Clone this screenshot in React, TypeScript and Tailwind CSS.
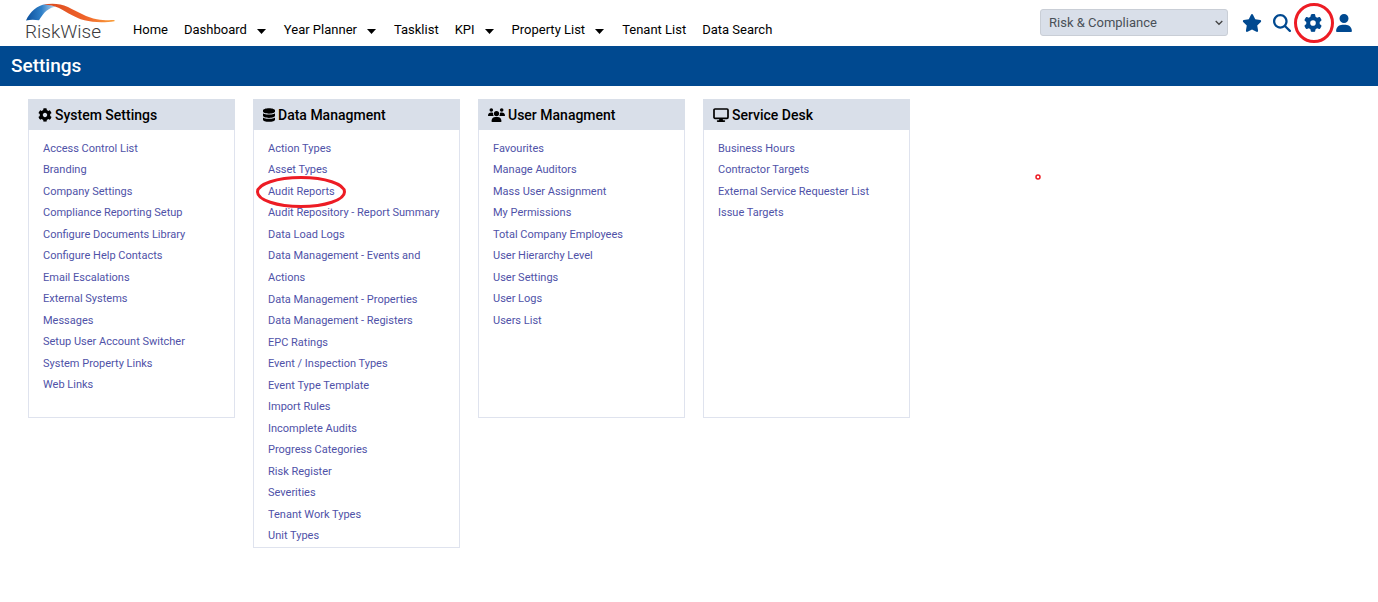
import { ReactNode } from "react";
import {
  FaDatabase,
  FaGear,
  FaMagnifyingGlass,
  FaStar,
  FaUser,
} from "react-icons/fa6";
import { FaCog } from "react-icons/fa";

type Card = { title: string; icon: ReactNode; links: string[] };

const NAV = [
  { label: "Home" },
  { label: "Dashboard", menu: true },
  { label: "Year Planner", menu: true },
  { label: "Tasklist" },
  { label: "KPI", menu: true },
  { label: "Property List", menu: true },
  { label: "Tenant List" },
  { label: "Data Search" },
];

function PeopleIcon() {
  return (
    <svg width="17" height="14" viewBox="0 0 17 14" fill="currentColor" aria-hidden="true">
      <circle cx="3.3" cy="2" r="1.8" />
      <circle cx="13.7" cy="2" r="1.8" />
      <circle cx="8.5" cy="5.6" r="2.6" />
      <path d="M0 7.8C0 5.8 1.4 4.6 3.2 4.6c.8 0 1.4.1 1.9.5-.2 1.2 0 2.1.6 3H.4Q0 8.1 0 7.8Z" />
      <path d="M17 7.8c0-2-1.4-3.2-3.2-3.2-.8 0-1.4.1-1.9.5.2 1.2 0 2.1-.6 3h5.300q.4 0 .4-.3Z" />
      <path d="M3.500 13.200c0-2.600 1.700-4.200 3.900-4.200h2.200c2.200 0 3.900 1.600 3.900 4.200 0 .5-.3.800-.8.800H4.300c-.5 0-.8-.3-.8-.8Z" />
    </svg>
  );
}

function ScreenIcon() {
  return (
    <svg width="16" height="14" viewBox="0 0 16 14" aria-hidden="true">
      <rect x="1" y="1" width="14" height="9.300" rx="1" fill="none" stroke="currentColor" strokeWidth="1.700" />
      <path d="M6.500 10h3l.5 2.300h1.500q.7 0 .7.800t-.7.800h-7q-.7 0-.7-.8t.7-.8H6Z" fill="currentColor" />
    </svg>
  );
}

const CARDS: Card[] = [
  {
    title: "System Settings",
    icon: <FaCog size={14} />,
    links: [
      "Access Control List",
      "Branding",
      "Company Settings",
      "Compliance Reporting Setup",
      "Configure Documents Library",
      "Configure Help Contacts",
      "Email Escalations",
      "External Systems",
      "Messages",
      "Setup User Account Switcher",
      "System Property Links",
      "Web Links",
    ],
  },
  {
    title: "Data Managment",
    icon: <FaDatabase className="h-[14px] w-3" />,
    links: [
      "Action Types",
      "Asset Types",
      "Audit Reports",
      "Audit Repository - Report Summary",
      "Data Load Logs",
      "Data Management - Events and Actions",
      "Data Management - Properties",
      "Data Management - Registers",
      "EPC Ratings",
      "Event / Inspection Types",
      "Event Type Template",
      "Import Rules",
      "Incomplete Audits",
      "Progress Categories",
      "Risk Register",
      "Severities",
      "Tenant Work Types",
      "Unit Types",
    ],
  },
  {
    title: "User Managment",
    icon: <PeopleIcon />,
    links: [
      "Favourites",
      "Manage Auditors",
      "Mass User Assignment",
      "My Permissions",
      "Total Company Employees",
      "User Hierarchy Level",
      "User Settings",
      "User Logs",
      "Users List",
    ],
  },
  {
    title: "Service Desk",
    icon: <ScreenIcon />,
    links: [
      "Business Hours",
      "Contractor Targets",
      "External Service Requester List",
      "Issue Targets",
    ],
  },
];

function Logo() {
  return (
    <svg width="92" height="46" viewBox="0 0 92 46" role="img" aria-label="RiskWise">
      <defs>
        <linearGradient id="blue" x1="0" x2="1">
          <stop offset="0" stopColor="#0b4f9c" />
          <stop offset="0.5" stopColor="#2f80c8" />
          <stop offset="1" stopColor="#cfe3f4" />
        </linearGradient>
        <linearGradient id="orange" x1="0" x2="1">
          <stop offset="0" stopColor="#d9481f" />
          <stop offset="0.6" stopColor="#f0642a" />
          <stop offset="1" stopColor="#f9a03c" />
        </linearGradient>
      </defs>
      <path d="M1 20.500C5 12 12 5 21 4.300L32 6.500C24 7 18 13 14 20.300Q7 19 1 20.500Z" fill="url(#blue)" />
      <path d="M18 4.700C27 3 35 3.500 43 7c10 5 19 10.500 29 12.200 6 1 11 1.100 17.500.8v1.200c-9 1.500-21 1.500-30-.9C49 17.500 43 12.500 34 8 28 5 23 4.500 18 4.700Z" fill="url(#orange)" />
      <text x="0" y="38" fontSize="19" fontWeight="300" fill="#3c3c3e" fontFamily="Roboto, sans-serif">
        RiskWise
      </text>
    </svg>
  );
}

function Header() {
  return (
    <header className="flex h-[46px] items-start pr-[25px] pl-[25px]">
      <a href="#home" className="shrink-0">
        <Logo />
      </a>
      <nav className="ml-4 flex gap-4 pt-5 text-[13px] leading-5 text-black">
        {NAV.map((item) =>
          item.menu ? (
            <button key={item.label} type="button" className="flex items-center gap-[10px] pr-[2px] whitespace-nowrap">
              {item.label}
              <svg width="9" height="5" viewBox="0 0 9 5" className="mt-[2px]" aria-hidden="true">
                <path d="M0 0h9L4.500 5Z" />
              </svg>
            </button>
          ) : (
            <a key={item.label} href="#nav" className="whitespace-nowrap">
              {item.label}
            </a>
          ),
        )}
      </nav>
      <div className="ml-auto flex items-center pt-[9px] text-[#004990]">
        <div className="grid items-center">
          <select
            aria-label="Module"
            className="col-start-1 row-start-1 h-[27px] w-[188px] appearance-none rounded-[3px] border border-[#c9ced6] bg-[#d9dfe9] px-2 text-[13px] text-[#495057]"
          >
            <option>Risk &amp; Compliance</option>
          </select>
          <svg width="8" height="6" viewBox="0 0 8 6" className="pointer-events-none col-start-1 row-start-1 mr-[5px] justify-self-end" aria-hidden="true">
            <path d="m.7 1 3.300 3.300L7.300 1" fill="none" stroke="#444" strokeWidth="1.300" />
          </svg>
        </div>
        <button type="button" aria-label="Favourites" className="ml-[14px]">
          <FaStar size={20} />
        </button>
        <button type="button" aria-label="Search" className="ml-[11px]">
          <FaMagnifyingGlass size={18} />
        </button>
        <button type="button" aria-label="Settings" className="relative ml-[13px]">
          <FaGear size={18} />
          <svg width="42" height="42" viewBox="0 0 42 42" className="absolute -top-3 -left-[11px] max-w-none" aria-hidden="true">
            <circle cx="21" cy="21" r="18.500" fill="none" stroke="#ed1c24" strokeWidth="3" />
          </svg>
        </button>
        <button type="button" aria-label="Account" className="ml-[13px]">
          <FaUser size={18} />
        </button>
      </div>
    </header>
  );
}

function SettingsCard({ title, icon, links }: Card) {
  return (
    <section className="min-h-[319px] border border-[#dfe3ee] bg-white">
      <h2 className="-mx-px -mt-px flex h-[31px] items-center gap-[3px] bg-[#d9dfe9] pl-[10px] text-sm font-medium text-black">
        {icon}
        {title}
      </h2>
      <ul className="pt-2 pr-3 pl-[14px] text-[11px] text-[#4f52a8]">
        {links.map((link) => (
          <li key={link} className="odd:leading-[21px] even:leading-[22px]">
            <a href="#setting" className="relative">
              {link}
              {link === "Audit Reports" && (
                <svg width="92" height="34" viewBox="0 0 92 34" className="absolute -top-[10px] -left-[13px] max-w-none" aria-hidden="true">
                  <ellipse cx="46" cy="17" rx="43.500" ry="14.500" fill="none" stroke="#ed1c24" strokeWidth="3" />
                </svg>
              )}
            </a>
          </li>
        ))}
      </ul>
    </section>
  );
}

export default function App() {
  return (
    <div className="min-h-screen bg-white font-['Roboto',sans-serif]">
      <Header />
      <div className="flex h-10 items-center bg-[#004990] pl-[11px]">
        <h1 className="text-[19px] font-medium text-white">Settings</h1>
      </div>
      <main className="relative grid grid-cols-6 items-start gap-[18px] pt-[13px] pr-[18px] pb-6 pl-7">
        {CARDS.map((card) => (
          <SettingsCard key={card.title} {...card} />
        ))}
        <svg width="6" height="6" viewBox="0 0 6 6" className="absolute top-[88px] left-[1035px]" aria-hidden="true">
          <circle cx="3" cy="3" r="2" fill="none" stroke="#ed1c24" strokeWidth="1.500" />
        </svg>
      </main>
    </div>
  );
}
